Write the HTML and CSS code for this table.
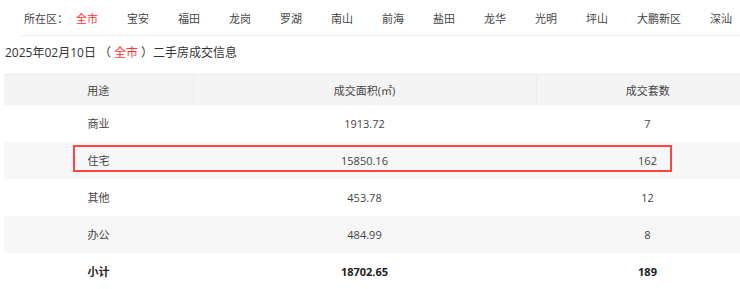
FILE: index.html
```html
<!DOCTYPE html>
<html lang="zh-CN">
<head>
<meta charset="utf-8">
<title>二手房成交信息</title>
<link rel="stylesheet" href="styles.css">
</head>
<body>
<div class="page">
  <div class="nav">
    <span class="nav-label">所在区：</span>
    <ul class="nav-list">
      <li class="active">全市</li>
      <li>宝安</li>
      <li>福田</li>
      <li>龙岗</li>
      <li>罗湖</li>
      <li>南山</li>
      <li>前海</li>
      <li>盐田</li>
      <li>龙华</li>
      <li>光明</li>
      <li>坪山</li>
      <li>大鹏新区</li>
      <li>深汕</li>
    </ul>
  </div>
  <div class="title">
    <span class="date">2025年02月10日</span><span class="paren-open">（</span><span class="red">全市</span><span class="paren-close">）</span><span class="title-text">二手房成交信息</span>
  </div>
  <div class="table-wrap">
    <table class="deal">
      <colgroup>
        <col class="c1"><col class="c2"><col class="c3">
      </colgroup>
      <thead>
        <tr><th>用途</th><th>成交面积(㎡)</th><th>成交套数</th></tr>
      </thead>
      <tbody>
        <tr><td>商业</td><td>1913.72</td><td>7</td></tr>
        <tr class="alt"><td>住宅</td><td>15850.16</td><td>162</td></tr>
        <tr><td>其他</td><td>453.78</td><td>12</td></tr>
        <tr class="alt"><td>办公</td><td>484.99</td><td>8</td></tr>
        <tr class="total"><td>小计</td><td>18702.65</td><td>189</td></tr>
      </tbody>
    </table>
    <div class="highlight"></div>
  </div>
</div>
</body>
</html>
```
FILE: styles.css
```css
html, body {
  margin: 0;
  padding: 0;
  background: #fff;
  overflow: hidden;
}
body {
  font-family: "Open Sans", "Noto Sans CJK SC", sans-serif;
  color: #333;
}
.page {
  width: 740px;
  overflow: hidden;
}
.nav {
  display: flex;
  align-items: center;
  height: 36px;
  margin-left: 21px;
  padding-left: 3px;
  border-bottom: 1px solid #ebebeb;
  box-sizing: border-box;
  font-size: 11px;
  color: #444;
  white-space: nowrap;
}
.nav-label {
  width: 52px;
  flex: none;
}
.nav-list {
  display: flex;
  gap: 29px;
  margin: 0;
  padding: 0;
  list-style: none;
}
.nav-list li {
  flex: none;
}
.nav-list .active {
  color: #f33;
}
.title {
  height: 30px;
  line-height: 30px;
  margin: 2px 0 6px 5px;
  font-size: 12px;
  color: #333;
  white-space: nowrap;
}
.date {
  margin-right: 3px;
}
.paren-open {
  margin-right: 3px;
}
.paren-close {
  margin-left: 3px;
}
.red {
  color: #f33;
}
.table-wrap {
  position: relative;
  margin-left: 4px;
  overflow: hidden;
}
.deal {
  width: 755px;
  border-collapse: collapse;
  table-layout: fixed;
  font-size: 11px;
}
.c1 { width: 189px; }
.c2 { width: 343px; }
.c3 { width: 223px; }
.deal th {
  height: 30px;
  padding: 0;
  background: #f4f4f4;
  border-top: 1px solid #ebebeb;
  border-left: 1px solid #ebebeb;
  font-weight: normal;
  color: #444;
  box-sizing: border-box;
}
.deal th:first-child {
  border-left: none;
}
.deal td {
  height: 37px;
  padding: 0;
  text-align: center;
  color: #444;
}
.deal .alt td {
  background: #f7f7f7;
}
.deal .total td {
  font-weight: bold;
  color: #222;
}
.highlight {
  position: absolute;
  left: 69px;
  top: 71px;
  width: 599px;
  height: 27px;
  border: 2px solid #f44;
  box-sizing: border-box;
}
```
